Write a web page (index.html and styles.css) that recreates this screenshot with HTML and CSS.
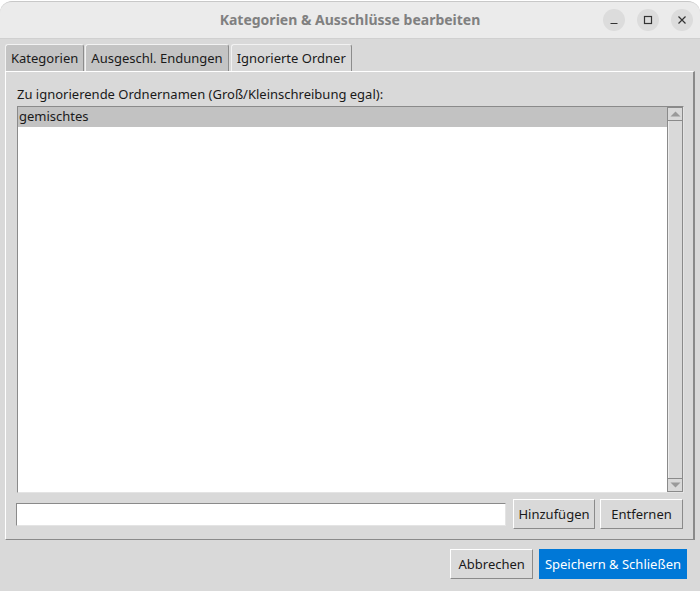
FILE: index.html
```html
<!DOCTYPE html>
<html lang="de">
<head>
<meta charset="utf-8">
<title>Kategorien &amp; Ausschlüsse bearbeiten</title>
<link rel="stylesheet" href="styles.css">
</head>
<body>
<div class="window">
  <div class="titlebar">
    <div class="title">Kategorien &amp; Ausschlüsse bearbeiten</div>
    <div class="wm-buttons">
      <span class="wm-btn"><svg width="10" height="10" viewBox="0 0 10 10"><path d="M1.5 8.5h7" stroke="#333" stroke-width="1.2"/></svg></span>
      <span class="wm-btn"><svg width="10" height="10" viewBox="0 0 10 10"><rect x="1.5" y="1.5" width="7" height="7" fill="none" stroke="#333" stroke-width="1.2"/></svg></span>
      <span class="wm-btn"><svg width="10" height="10" viewBox="0 0 10 10"><path d="M1.5 1.5l7 7M8.5 1.5l-7 7" stroke="#333" stroke-width="1.2"/></svg></span>
    </div>
  </div>
  <div class="body">
    <div class="tabs">
      <div class="tab">Kategorien</div>
      <div class="tab">Ausgeschl. Endungen</div>
      <div class="tab active">Ignorierte Ordner</div>
    </div>
    <div class="panel">
      <div class="label">Zu ignorierende Ordnernamen (Groß/Kleinschreibung egal):</div>
      <div class="listbox">
        <div class="list">
          <div class="row selected">gemischtes</div>
        </div>
        <div class="scrollbar">
          <div class="arrow"><svg width="11" height="6" viewBox="0 0 11 6"><path d="M5.5 0.5L10.5 5.5H0.5Z" fill="#9a9a9a"/></svg></div>
          <div class="trough"></div>
          <div class="arrow"><svg width="11" height="6" viewBox="0 0 11 6"><path d="M0.5 0.5H10.5L5.5 5.5Z" fill="#9a9a9a"/></svg></div>
        </div>
      </div>
      <div class="entry-row">
        <div class="entry"></div>
        <button class="btn btn-add">Hinzufügen</button>
        <button class="btn btn-remove">Entfernen</button>
      </div>
    </div>
    <div class="footer">
      <button class="btn">Abbrechen</button>
      <button class="btn primary">Speichern &amp; Schließen</button>
    </div>
  </div>
</div>
</body>
</html>
```

FILE: styles.css
```css
* { box-sizing: border-box; }
html, body {
  margin: 0;
  padding: 0;
  background: #ffffff;
}
body {
  width: 700px;
  height: 591px;
  overflow: hidden;
  font-family: "Noto Sans", "DejaVu Sans", sans-serif;
  font-size: 13px;
  color: #1a1a1a;
}
.window {
  width: 700px;
  height: 591px;
  margin-top: 1px;
  border-radius: 12px 12px 0 0;
  overflow: hidden;
  background: #d9d9d9;
  display: flex;
  flex-direction: column;
  border-top: 1px solid #c8c8c8;
}
.titlebar {
  height: 37px;
  flex: none;
  background: #ebebeb;
  border-bottom: 1px solid #d0d0d0;
  display: flex;
  align-items: center;
  justify-content: center;
  position: relative;
}
.title {
  font-size: 14px;
  font-weight: bold;
  color: #808080;
  margin-top: -2px;
}
.wm-buttons {
  position: absolute;
  right: 7px;
  top: 7px;
  display: flex;
  gap: 12px;
}
.wm-btn {
  width: 22px;
  height: 22px;
  border-radius: 50%;
  background: #dcdcdc;
  display: flex;
  align-items: center;
  justify-content: center;
}
.body {
  flex: 1;
  display: flex;
  flex-direction: column;
  padding: 5px 5px 0 5px;
}
.tabs {
  display: flex;
  gap: 1px;
  height: 27px;
  flex: none;
}
.tab {
  height: 27px;
  padding: 0 5px;
  line-height: 26px;
  background: #c4c4c4;
  border-top: 1px solid #f2f2f2;
  border-left: 1px solid #f2f2f2;
  border-right: 1px solid #8c8c8c;
  border-radius: 3px 3px 0 0;
  white-space: nowrap;
}
.tab.active {
  background: #d9d9d9;
  margin-left: 1px;
}
.panel {
  width: 690px;
  height: 469px;
  flex: none;
  border-top: 1px solid #ffffff;
  border-left: 1px solid #ffffff;
  border-right: 2px solid #8a8a8a;
  border-bottom: 1px solid #8a8a8a;
  padding: 14px 9px 10px 11px;
  display: flex;
  flex-direction: column;
}
.label {
  height: 20px;
  line-height: 17px;
  white-space: nowrap;
}
.listbox {
  flex: 1;
  display: flex;
  border-top: 1px solid #8a8a8a;
  border-left: 1px solid #8a8a8a;
  border-bottom: 1px solid #e4e4e4;
  border-right: 1px solid #e4e4e4;
  background: #ffffff;
}
.list {
  flex: 1;
}
.row {
  height: 20px;
  line-height: 19px;
  padding-left: 1px;
}
.row.selected {
  background: #c2c2c2;
}
.scrollbar {
  width: 16px;
  flex: none;
  background: #d9d9d9;
  border: 1px solid #8a8a8a;
  display: flex;
  flex-direction: column;
}
.arrow {
  height: 13px;
  display: flex;
  align-items: center;
  justify-content: center;
  background: #d9d9d9;
  border-bottom: 1px solid #8a8a8a;
}
.arrow:last-child {
  border-bottom: none;
  border-top: 1px solid #8a8a8a;
}
.trough {
  flex: 1;
  border-left: 1px solid #ededed;
}
.entry-row {
  display: flex;
  align-items: center;
  margin-top: 6px;
  height: 30px;
  flex: none;
}
.entry {
  width: 490px;
  height: 23px;
  margin-left: -1px;
  background: #ffffff;
  border-top: 1px solid #8a8a8a;
  border-left: 1px solid #8a8a8a;
  border-bottom: 1px solid #e4e4e4;
  border-right: 1px solid #e4e4e4;
  margin-right: 7px;
}
.btn {
  font-family: "Noto Sans", "DejaVu Sans", sans-serif;
  font-size: 13px;
  color: #1a1a1a;
  background: #d9d9d9;
  height: 30px;
  padding: 0 7px;
  margin: 0;
  border-top: 1px solid #ffffff;
  border-left: 1px solid #ffffff;
  border-right: 1px solid #8a8a8a;
  border-bottom: 1px solid #8a8a8a;
  border-radius: 0;
  white-space: nowrap;
}
.btn-add {
  width: 82px;
  padding: 0;
}
.btn-remove {
  width: 83px;
  padding: 0;
  margin-left: 5px;
}
.footer {
  display: flex;
  justify-content: flex-end;
  gap: 6px;
  padding: 9px 8px 0 0;
}
.btn.primary {
  background: #0078d7;
  color: #ffffff;
  border-color: #0078d7;
  padding: 0 5px;
}
```
